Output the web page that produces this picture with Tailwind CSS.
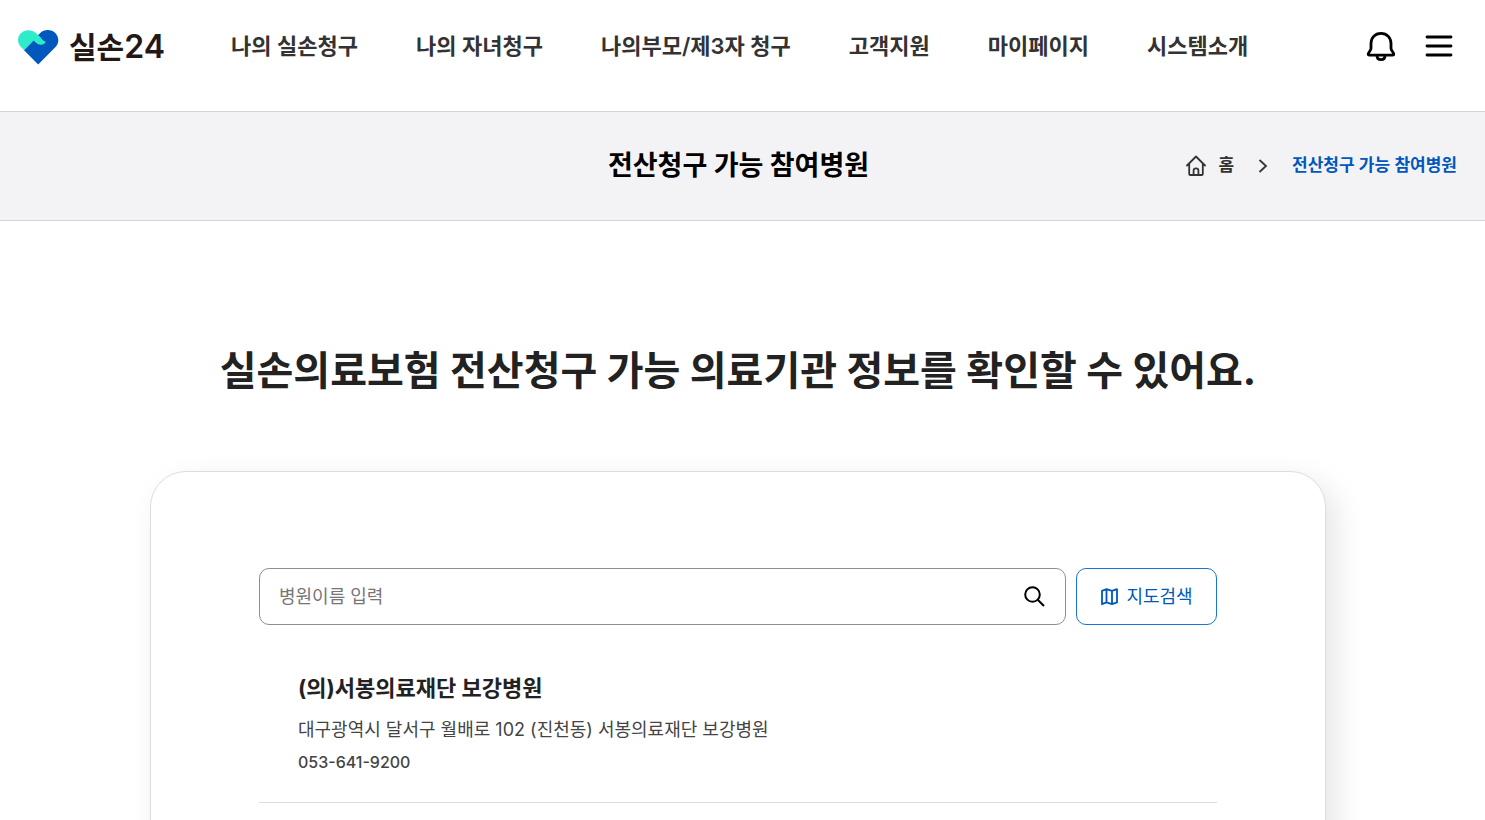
<!DOCTYPE html>
<html lang="ko">
<head>
  <meta charset="UTF-8">
  <meta name="viewport" content="width=device-width, initial-scale=1.0">
  <title>전산청구 가능 참여병원 - 실손24</title>
  <script src="https://cdn.jsdelivr.net/npm/@tailwindcss/browser@4"></script>
</head>
<body class="font-['Inter','Noto_Sans_CJK_KR',sans-serif] bg-white text-[#222]">
  <div class="flex flex-col min-h-screen overflow-hidden">
    <header class="flex items-start h-28 pt-6 pl-4 pr-8 border-b border-[#ced6de]">
      <a href="#" class="flex items-center gap-[9px] h-[46px] w-[215px] shrink-0 text-[#231815]">
        <svg class="w-11 h-9" viewBox="0 0 44 36" aria-hidden="true">
          <path d="M22.200 35.500 L7.800 21 L22.200 6 L24 4.200 C28 -.2 35.500 -.2 39.500 4.200 C43.300 8.500 43.200 14 39.500 18 Z" fill="#0057bd"/>
          <path d="M8.200 21.200 L4.800 17.800 C1.300 14 1.200 8.500 4.500 4.600 C8.500 .2 15.500 0 19.800 4 L22.600 6.600 C25 8.200 26.500 12.200 29.800 12.800 C28.800 15.300 26 16.300 23.500 15.600 C21 15 19.500 13 17.600 11.400 Z" fill="#2eebc9"/>
        </svg>
        <span class="text-[30px] font-semibold leading-none whitespace-nowrap">실손<span class="text-[32px]">24</span></span>
      </a>
      <nav class="flex items-center gap-[58px] h-11 text-[22px] font-semibold text-[#333] whitespace-nowrap">
        <a href="#">나의 실손청구</a>
        <a href="#">나의 자녀청구</a>
        <a href="#">나의부모/제3자 청구</a>
        <a href="#">고객지원</a>
        <a href="#">마이페이지</a>
        <a href="#">시스템소개</a>
      </nav>
      <div class="flex items-center gap-7 h-11 ml-auto text-black">
        <button type="button" aria-label="알림">
          <svg class="w-8 h-8" viewBox="0 0 32 32" fill="none" stroke="currentColor" stroke-width="2.800" stroke-linejoin="round">
            <path d="M16 3.400 C9.800 3.400 6 8 6 13.500 V18.500 C6 20.500 3.200 22.500 3.200 24.300 C3.200 25 3.700 25.200 4.300 25.200 H27.700 C28.300 25.200 28.800 25 28.800 24.300 C28.800 22.500 26 20.500 26 18.500 V13.500 C26 8 22.200 3.400 16 3.400 Z"/>
            <path d="M12 25.500 C12 28 13.500 29.600 16 29.600 C18.500 29.600 20 28 20 25.500"/>
          </svg>
        </button>
        <button type="button" aria-label="전체메뉴">
          <svg class="w-7 h-7" viewBox="0 0 28 28" stroke="currentColor" stroke-width="2.800" stroke-linecap="round">
            <path d="M2 5h24M2 14h24M2 23h24"/>
          </svg>
        </button>
      </div>
    </header>

    <div class="grid grid-cols-[1fr_auto_1fr] items-center h-[109px] pl-5 pr-7 bg-[#f3f3f6] border-b border-[#ccd6e4]">
      <h2 class="col-start-2 text-[27px] font-bold text-black">전산청구 가능 참여병원</h2>
      <ol class="flex items-center justify-end text-[17px] font-semibold text-[#333]">
        <li>
          <a href="#" class="flex items-center gap-3">
            <svg class="w-5 h-6" viewBox="0 0 20 24" fill="none" stroke="currentColor" stroke-width="1.800" stroke-linejoin="round" stroke-linecap="round">
              <path d="M1 11.500 L10 2.500 L19 11.500 M3.200 10 V20 Q3.200 21 4.200 21 H15.800 Q16.800 21 16.800 20 V10"/>
              <path d="M7.600 20.500 V16.300 Q7.600 14.300 10 14.300 Q12.400 14.300 12.400 16.300 V20.500"/>
            </svg>
            홈
          </a>
        </li>
        <li class="px-6" aria-hidden="true">
          <svg class="w-2.5 h-4" viewBox="0 0 10 16" fill="none" stroke="currentColor" stroke-width="1.800"><path d="M1.500 2 L8 8 L1.500 14"/></svg>
        </li>
        <li><a href="#" class="text-[#0057bd]" aria-current="page">전산청구 가능 참여병원</a></li>
      </ol>
    </div>

    <main class="flex flex-col grow pt-30 pr-[9px]">
      <h1 class="text-[40px] leading-[60px] font-bold text-center">실손의료보험 전산청구 가능 의료기관 정보를 확인할 수 있어요.</h1>

      <section class="grow w-full max-w-[1176px] mx-auto mt-[70px] -mb-12 px-27 pt-24 bg-white border border-[#ddd] rounded-t-[36px] shadow-[10px_10px_30px_rgba(0,0,0,0.1)]">
        <form class="flex gap-2.5">
          <div class="flex items-center grow h-[57px] px-[19px] border border-[#8e8e8e] rounded-[10px]">
            <input type="text" aria-label="병원이름" placeholder="병원이름 입력" class="grow text-lg outline-none placeholder:text-[#767676]">
            <button type="submit" aria-label="검색" class="text-black">
              <svg class="w-6 h-6" viewBox="0 0 24 24" fill="none" stroke="currentColor" stroke-width="2">
                <circle cx="10.500" cy="9.500" r="7.300"/>
                <path d="M15.700 14.700 L22 21"/>
              </svg>
            </button>
          </div>
          <button type="button" class="flex items-center justify-center gap-2 w-[141px] text-lg text-[#0057bd] border border-[#1a73d9] rounded-[10px]">
            <svg class="w-[18px] h-[18px]" viewBox="0 0 18 18" fill="none" stroke="currentColor" stroke-width="1.800" stroke-linejoin="round">
              <path d="M2 2.800 L6.500 1.200 L12 2.800 L17 1.200 V14.400 L12 16.200 L6.500 14.400 L2 16.200 Z M6.500 1.200 V14.400 M12 2.800 V16.200"/>
            </svg>
            지도검색
          </button>
        </form>

        <ul>
          <li class="pl-[39px] pt-[47px] pb-[26px] border-b border-[#ddd]">
            <h3 class="text-[22px] leading-8 font-bold">(의)서봉의료재단 보강병원</h3>
            <p class="mt-3 text-lg leading-7 text-[#444]">대구광역시 달서구 월배로 102 (진천동) 서봉의료재단 보강병원</p>
            <p class="mt-1 text-base leading-7 font-medium text-[#444]">053-641-9200</p>
          </li>
        </ul>
      </section>
    </main>
  </div>
</body>
</html>
